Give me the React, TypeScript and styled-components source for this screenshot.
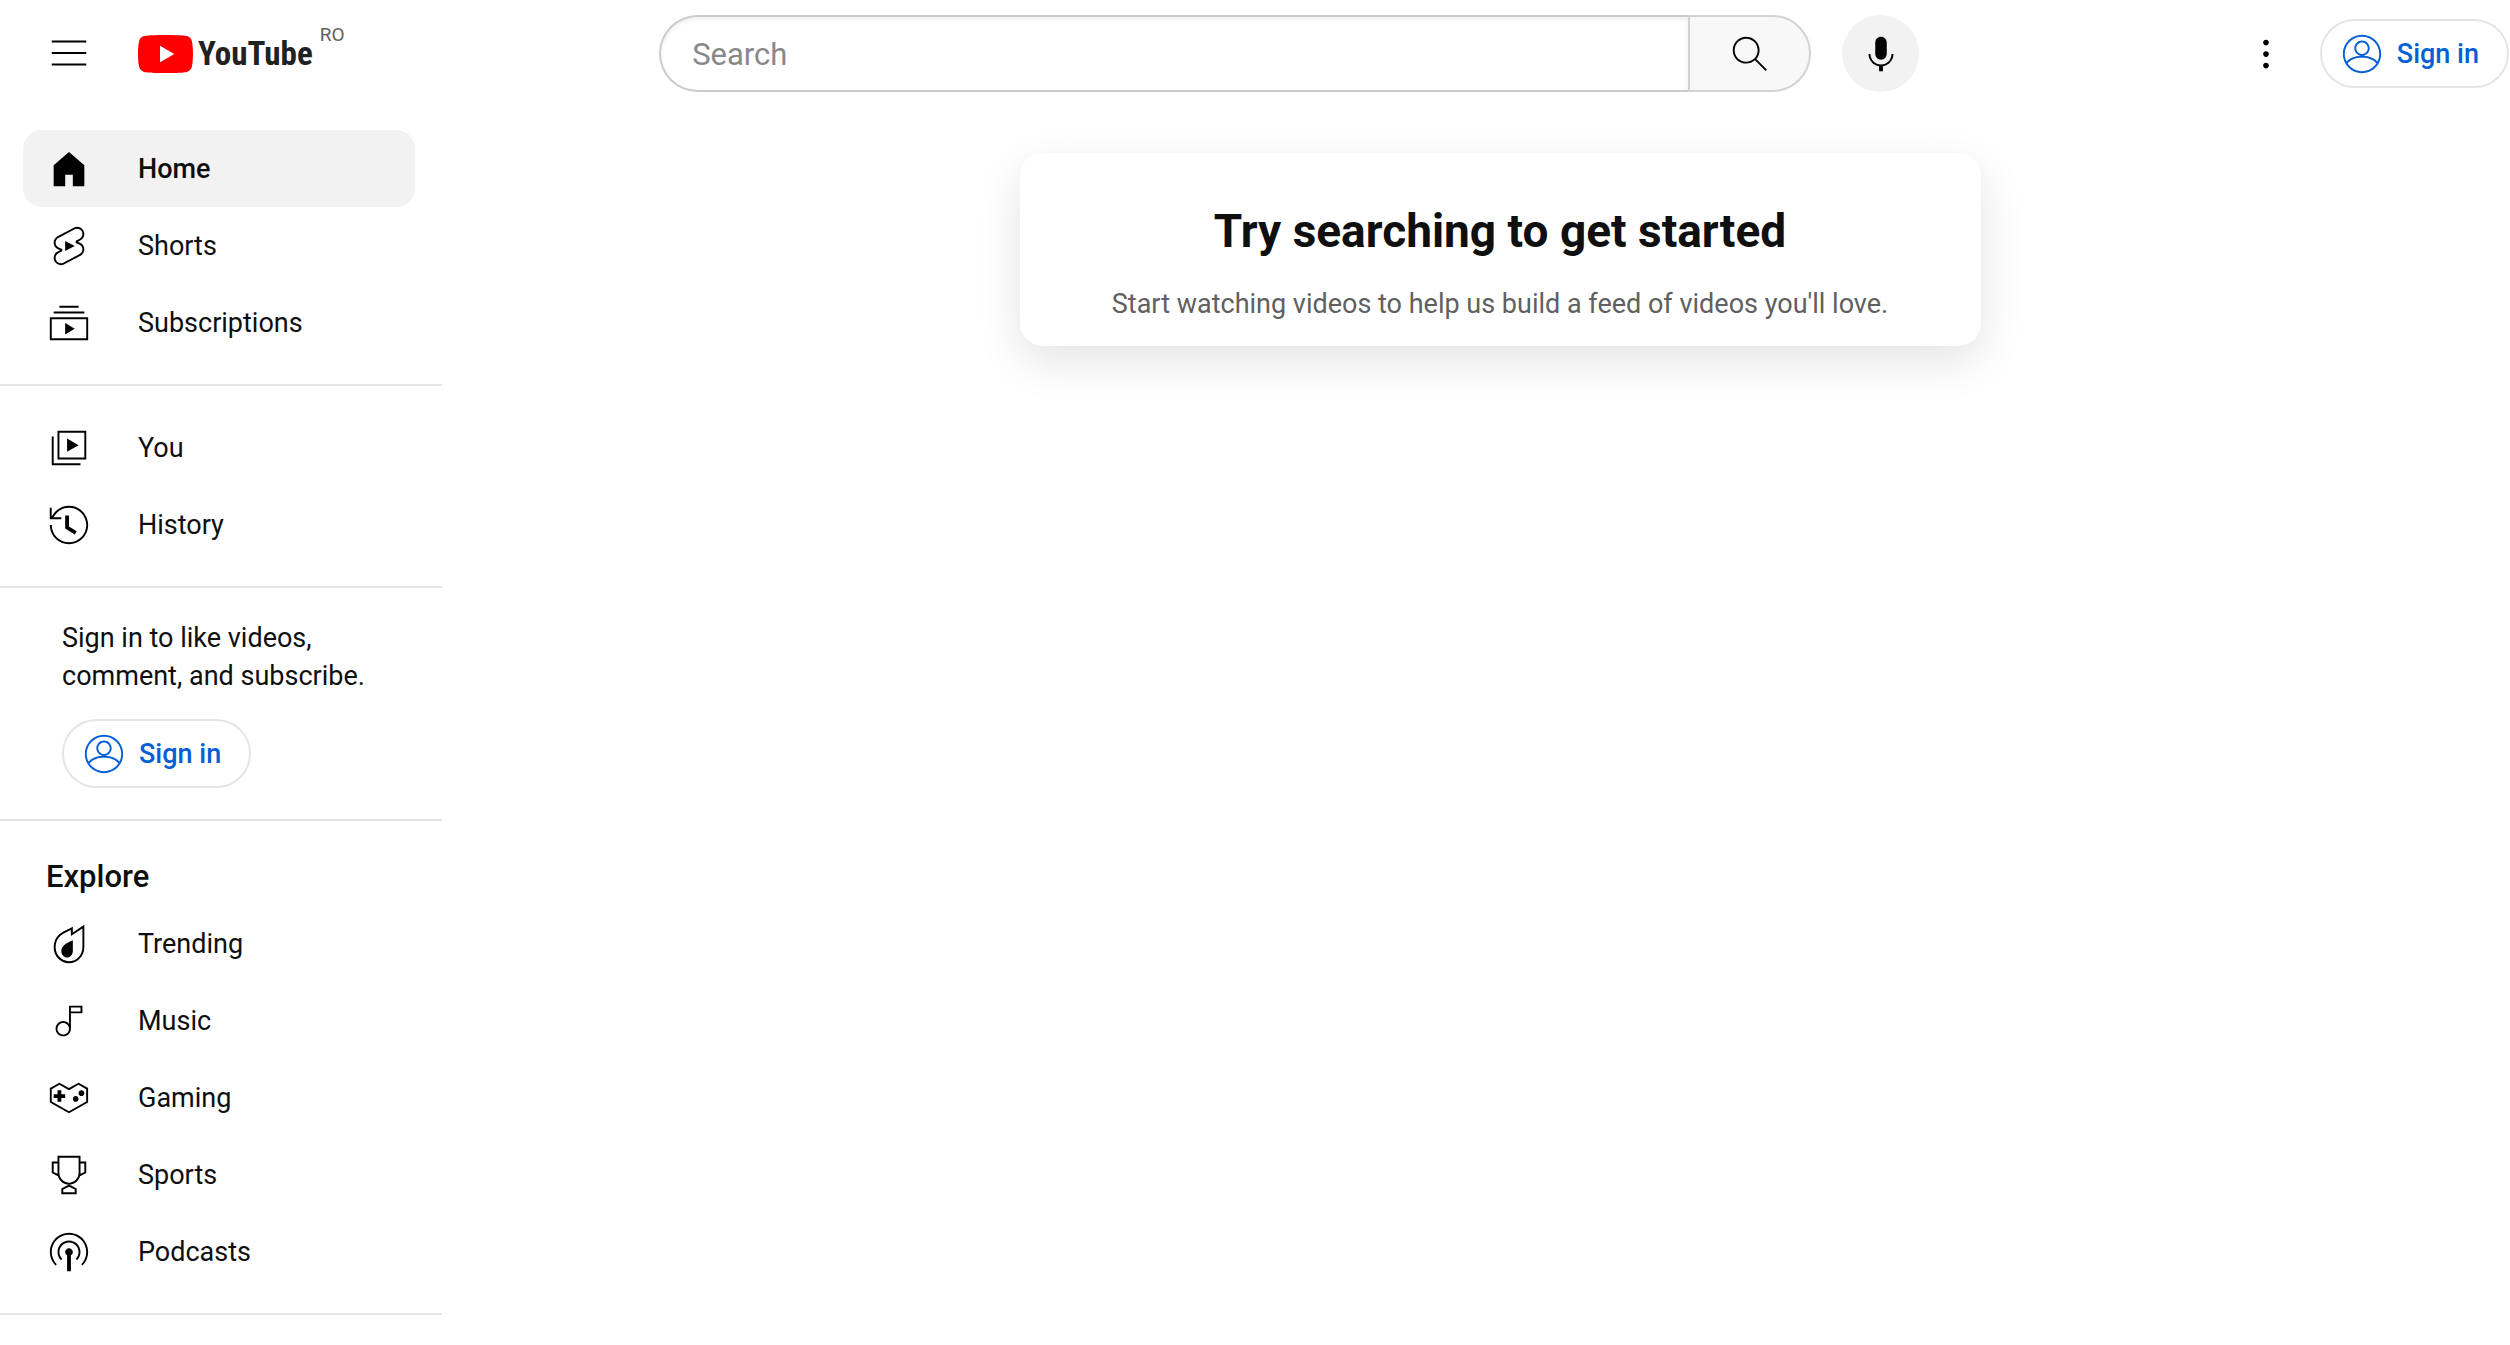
import React from "react";
import styled, { createGlobalStyle } from "styled-components";

const GlobalStyle = createGlobalStyle`
  *, *::before, *::after { box-sizing: border-box; }
  body {
    margin: 0;
    background: #fff;
    color: #0f0f0f;
    font-family: Roboto, "Liberation Sans", Arial, sans-serif;
    font-size: 27px;
    line-height: 38px;
  }
`;

const paths = {
  menu: "M21 6H3V5h18v1zm0 5H3v1h18v-1zm0 6H3v1h18v-1z",
  search:
    "m20.87 20.17-5.59-5.59C16.35 13.35 17 11.75 17 10c0-3.87-3.13-7-7-7s-7 3.13-7 7 3.13 7 7 7c1.75 0 3.35-.65 4.58-1.71l5.59 5.59.7-.71zM10 16c-3.31 0-6-2.69-6-6s2.69-6 6-6 6 2.69 6 6-2.69 6-6 6z",
  mic: "M12 3c-1.66 0-3 1.37-3 3.07v5.86c0 1.7 1.34 3.07 3 3.07s3-1.37 3-3.07V6.07C15 4.37 13.66 3 12 3zm6.5 9h-1c0 3.03-2.47 5.5-5.5 5.5S6.5 15.03 6.5 12h-1c0 3.24 2.39 5.93 5.5 6.41V21h2v-2.59c3.11-.48 5.5-3.17 5.5-6.41z",
  more: "M12 16.5c.83 0 1.5.67 1.5 1.5s-.67 1.5-1.5 1.5-1.5-.67-1.5-1.5.67-1.5 1.5-1.5zM10.5 12c0 .83.67 1.5 1.5 1.5s1.5-.67 1.5-1.5-.67-1.5-1.5-1.5-1.5.67-1.5 1.5zm0-6c0 .83.67 1.5 1.5 1.5s1.5-.67 1.5-1.5-.67-1.5-1.5-1.5-1.5.67-1.5 1.5z",
  account:
    "M12 2C6.48 2 2 6.48 2 12s4.48 10 10 10 10-4.48 10-10S17.52 2 12 2zM3 12c0-4.96 4.04-9 9-9s9 4.04 9 9c0 1.42-.34 2.76-.93 3.96-1.53-1.72-3.98-2.89-7.38-3.03C14.57 12.6 16 10.97 16 9c0-2.21-1.79-4-4-4S8 6.79 8 9c0 1.97 1.43 3.6 3.31 3.93-3.4.14-5.85 1.31-7.38 3.03C3.34 14.76 3 13.42 3 12zm6-3c0-1.65 1.35-3 3-3s3 1.35 3 3-1.35 3-3 3-3-1.35-3-3zm3 12c-3.16 0-5.94-1.64-7.55-4.12C6.01 14.93 8.61 13.9 12 13.9c3.39 0 5.99 1.03 7.55 2.98C17.94 19.36 15.16 21 12 21z",
  home: "M4 21V10.08l8-6.96 8 6.96V21h-6v-6h-4v6H4z",
  shorts:
    "M10 14.65v-5.3L15 12l-5 2.65zm7.77-4.33-1.2-.5L18 9.06c1.84-.96 2.53-3.23 1.56-5.06s-3.24-2.53-5.07-1.56L6 6.94c-1.29.68-2.07 2.04-2 3.49.07 1.42.93 2.67 2.22 3.25.03.01 1.2.5 1.2.5L6 14.93c-1.83.97-2.53 3.24-1.56 5.07.97 1.83 3.24 2.53 5.07 1.56l8.5-4.5c1.29-.68 2.06-2.04 1.99-3.49-.07-1.42-.94-2.68-2.23-3.25zm-.23 5.86-8.5 4.5c-1.34.71-3.01.2-3.72-1.14-.71-1.34-.2-3.01 1.14-3.72l2.04-1.08v-1.21l-.69-.28-1.11-.46c-.99-.41-1.65-1.35-1.7-2.41-.05-1.06.52-2.06 1.46-2.56l8.5-4.5c1.34-.71 3.01-.2 3.72 1.14.71 1.34.2 3.01-1.14 3.72L15.5 9.26v1.21l1.8.74c.99.41 1.65 1.35 1.7 2.41.05 1.06-.52 2.06-1.46 2.56z",
  subscriptions: "M10 18v-6l5 3-5 3zm7-15H7v1h10V3zm3 3H4v1h16V6zm2 3H2v12h20V9zM3 10h18v10H3V10z",
  you: "m11 7 6 3.5-6 3.5V7zm7 13H4V6H3v15h15v-1zm3-2H6V3h15v15zM7 17h13V4H7v13z",
  history:
    "M14.97 16.95 10 13.87V7h2v5.76l4.03 2.49-1.06 1.7zM22 12c0 5.51-4.49 10-10 10S2 17.51 2 12h1c0 4.96 4.04 9 9 9s9-4.04 9-9-4.04-9-9-9C8.81 3 5.92 4.64 4.28 7.38c-.11.18-.22.37-.31.56L3.94 8H8v1H1.96V3h1v4.74c.04-.09.07-.17.11-.25.11-.22.23-.42.35-.63C5.22 3.86 8.51 2 12 2c5.51 0 10 4.49 10 10z",
  trending:
    "M19 3.87v9.77C19 17.7 15.86 21 12 21s-7-3.3-7-7.37v-.13c0-1.06.22-2.13.62-3.09.5-1.19 1.29-2.21 2.27-2.97.85-.66 1.83-1.14 2.87-1.65.39-.19.77-.38 1.15-.58.36-.19.72-.38 1.08-.56v3.22l1.55-1.04L19 3.87M20 2l-6 4V3c-.85.44-1.7.88-2.55 1.33-1.41.74-2.9 1.34-4.17 2.32-1.13.87-2.02 2.05-2.58 3.37-.46 1.09-.7 2.29-.7 3.48v.14C4 18.26 7.58 22 12 22s8-3.74 8-8.36V2zM14 10c-1.15.6-2.4 1.05-3.45 1.8C9.1 12.7 8 14 8 15.6 8 17.5 9.35 19 11 19s3-1.5 3-3.4V10z",
  music:
    "M12 4v9.38c-.73-.84-1.8-1.38-3-1.38-2.21 0-4 1.79-4 4s1.79 4 4 4 4-1.79 4-4V8h6V4h-7zM9 19c-1.66 0-3-1.34-3-3s1.34-3 3-3 3 1.34 3 3-1.34 3-3 3zm9-12h-5V5h5v2z",
  gaming:
    "M10 12H8v2H6v-2H4v-2h2V8h2v2h2v2zm7 .5c0-.83-.67-1.5-1.5-1.5s-1.5.67-1.5 1.5.67 1.5 1.5 1.5 1.5-.67 1.5-1.5zm3-3c0-.83-.67-1.5-1.5-1.5S17 8.67 17 9.5s.67 1.5 1.5 1.5S20 10.33 20 9.5zm-3.03-4.35-4.5 2.53-.49.27-.49-.27-4.5-2.53L3 7.39v6.43l8.98 5.04 8.98-5.04V7.39l-3.99-2.24m0-1.15 4.99 2.8v7.6L11.98 20 2 14.4V6.8L6.99 4l4.99 2.8L16.97 4z",
  sports:
    "M18 5V2H6v3H3v6l3.23 1.61c.7 2.5 2.97 4.34 5.69 4.38L8 19v3h8v-3l-3.92-2.01c2.72-.04 4.99-1.88 5.69-4.38L21 11V5h-3zM6 11.38l-2-1V6h2v5.38zM15 21H9v-1.39l3-1.54 3 1.54V21zm2-10c0 2.76-2.24 5-5 5s-5-2.24-5-5V3h10v8zm3-.62-2 1V6h2v4.38z",
  podcasts:
    "M6 12c0-3.31 2.69-6 6-6s6 2.69 6 6c0 1.66-.67 3.16-1.77 4.25l-.71-.71C16.44 14.63 17 13.38 17 12c0-2.76-2.24-5-5-5s-5 2.24-5 5c0 1.38.56 2.63 1.47 3.54l-.71.71C6.67 15.16 6 13.66 6 12zm8 0c0-1.1-.9-2-2-2s-2 .9-2 2c0 .74.4 1.38 1 1.72V22h2v-8.28c.6-.34 1-.98 1-1.72zm-9.06 7.08.71-.71C4.01 16.74 3 14.49 3 12c0-4.96 4.04-9 9-9s9 4.04 9 9c0 2.49-1.01 4.74-2.65 6.37l.71.71C20.88 17.27 22 14.76 22 12c0-5.52-4.48-10-10-10S2 6.48 2 12c0 2.76 1.12 5.27 2.94 7.08z",
};

type IconName = keyof typeof paths;

const IconSvg = styled.svg<{ $accent?: boolean }>`
  display: block;
  flex: none;
  width: 46px;
  height: 46px;
  fill: ${(p) => (p.$accent ? "#065fd4" : "#000")};
`;

const Icon = ({ name, accent }: { name: IconName; accent?: boolean }) => (
  <IconSvg viewBox="0 0 24 24" aria-hidden="true" $accent={accent}>
    <path fillRule="evenodd" d={paths[name]} />
  </IconSvg>
);

const Header = styled.header`
  display: flex;
  align-items: center;
  justify-content: space-between;
  height: 107px;
  padding: 0 1px 0 30px;
`;

const HeaderStart = styled.div`
  display: flex;
  align-items: center;
  gap: 31px;
  padding-right: 6px;
`;

const HeaderEnd = styled.div`
  display: flex;
  align-items: center;
  gap: 15px;
`;

const IconButton = styled.button<{ $filled?: boolean }>`
  display: flex;
  align-items: center;
  justify-content: center;
  flex: none;
  width: 77px;
  height: 77px;
  padding: 0;
  border: 0;
  border-radius: 50%;
  background: ${(p) => (p.$filled ? "#f2f2f2" : "transparent")};
  cursor: pointer;
`;

const LogoLink = styled.a`
  display: flex;
  align-items: center;
  gap: 5px;
  height: 58px;
  color: #212121;
  text-decoration: none;
`;

const LogoMark = styled.svg`
  display: block;
  width: 55px;
  height: 38px;
`;

const Wordmark = styled.span`
  font-family: "Liberation Sans Narrow", "Roboto Condensed", Roboto, sans-serif;
  font-size: 33px;
  font-weight: 700;
  line-height: 38px;
`;

const Region = styled.span`
  align-self: flex-start;
  margin-left: 2px;
  color: #606060;
  font-size: 19px;
  line-height: 19px;
`;

const SearchArea = styled.div`
  display: flex;
  align-items: center;
  flex: 0 1 1260px;
  gap: 31px;
`;

const SearchForm = styled.form`
  display: flex;
  flex: 1;
  height: 77px;
`;

const SearchInput = styled.input`
  flex: 1;
  min-width: 0;
  padding: 2px 31px 0;
  border: 2px solid #ccc;
  border-right: 0;
  border-radius: 39px 0 0 39px;
  background: #fff;
  box-shadow: inset 0 2px 4px #eee;
  color: #0f0f0f;
  font: inherit;
  font-size: 31px;
  outline: 0;
  &::placeholder { color: #888; opacity: 1; }
`;

const SearchButton = styled.button`
  display: flex;
  align-items: center;
  justify-content: center;
  width: 123px;
  padding: 0;
  border: 2px solid #d3d3d3;
  border-radius: 0 39px 39px 0;
  background: #f8f8f8;
  cursor: pointer;
`;

const SignInLink = styled.a`
  display: inline-flex;
  align-items: center;
  gap: 12px;
  height: 69px;
  padding: 0 28px 0 17px;
  border: 2px solid #e5e5e5;
  border-radius: 35px;
  color: #065fd4;
  font-weight: 500;
  text-decoration: none;
`;

const Body = styled.div`
  display: flex;
  align-items: flex-start;
`;

const Sidebar = styled.nav`
  flex: none;
  width: 442px;
`;

const Section = styled.section`
  padding: 23px 27px 23px 23px;
  border-bottom: 2px solid #e5e5e5;
`;

const PromptSection = styled.section`
  padding: 31px 60px 31px 62px;
  border-bottom: 2px solid #e5e5e5;
`;

const Prompt = styled.p`
  margin: 0 0 24px;
`;

const SectionTitle = styled.h2`
  margin: 0;
  padding: 14px 23px 9px;
  font-size: 31px;
  font-weight: 500;
  line-height: 38px;
`;

const List = styled.ul`
  margin: 0;
  padding: 0;
  list-style: none;
`;

const NavLink = styled.a<{ $active?: boolean }>`
  display: flex;
  align-items: center;
  gap: 46px;
  height: 77px;
  padding: 0 23px;
  border-radius: 19px;
  background: ${(p) => (p.$active ? "#f2f2f2" : "transparent")};
  color: #0f0f0f;
  font-weight: ${(p) => (p.$active ? 500 : 400)};
  text-decoration: none;
`;

const Main = styled.main`
  display: flex;
  flex: 1;
  justify-content: center;
  min-width: 0;
  padding: 46px 0 46px 48px;
`;

const Card = styled.section`
  width: 100%;
  max-width: 961px;
  padding: 46px 46px 23px;
  border-radius: 23px;
  background: #fff;
  box-shadow: 0 15px 46px rgba(0, 0, 0, 0.11);
  text-align: center;
`;

const CardTitle = styled.h1`
  margin: 0 0 22px;
  font-size: 46px;
  font-weight: 700;
  line-height: 64px;
`;

const CardText = styled.p`
  margin: 0;
  color: #606060;
`;

type Entry = { icon: IconName; label: string; active?: boolean };

const primary: Entry[] = [
  { icon: "home", label: "Home", active: true },
  { icon: "shorts", label: "Shorts" },
  { icon: "subscriptions", label: "Subscriptions" },
];

const library: Entry[] = [
  { icon: "you", label: "You" },
  { icon: "history", label: "History" },
];

const explore: Entry[] = [
  { icon: "trending", label: "Trending" },
  { icon: "music", label: "Music" },
  { icon: "gaming", label: "Gaming" },
  { icon: "sports", label: "Sports" },
  { icon: "podcasts", label: "Podcasts" },
];

const NavList = ({ entries }: { entries: Entry[] }) => (
  <List>
    {entries.map((entry) => (
      <li key={entry.label}>
        <NavLink href="#" $active={entry.active} aria-current={entry.active ? "page" : undefined}>
          <Icon name={entry.icon} />
          <span>{entry.label}</span>
        </NavLink>
      </li>
    ))}
  </List>
);

const SignIn = () => (
  <SignInLink href="#">
    <Icon name="account" accent />
    <span>Sign in</span>
  </SignInLink>
);

export default function App() {
  return (
    <>
      <GlobalStyle />
      <Header>
        <HeaderStart>
          <IconButton type="button" aria-label="Guide">
            <Icon name="menu" />
          </IconButton>
          <LogoLink href="#">
            <LogoMark viewBox="0 0 55 38" aria-hidden="true">
              <path
                fill="#f00"
                d="M53.8 5.9A6.9 6.9 0 0 0 49 1.1C44.7 0 27.5 0 27.5 0S10.3 0 6 1.1A6.9 6.9 0 0 0 1.2 5.9C0 10.2 0 19 0 19s0 8.8 1.2 13.1A6.9 6.9 0 0 0 6 36.9C10.3 38 27.5 38 27.5 38s17.2 0 21.5-1.1a6.9 6.9 0 0 0 4.8-4.8C55 27.8 55 19 55 19s0-8.8-1.2-13.1z"
              />
              <path fill="#fff" d="M22 27.2 36.3 19 22 10.8z" />
            </LogoMark>
            <Wordmark>YouTube</Wordmark>
            <Region>RO</Region>
          </LogoLink>
        </HeaderStart>
        <SearchArea>
          <SearchForm role="search" onSubmit={(e) => e.preventDefault()}>
            <SearchInput type="text" placeholder="Search" aria-label="Search" />
            <SearchButton type="submit" aria-label="Search">
              <Icon name="search" />
            </SearchButton>
          </SearchForm>
          <IconButton type="button" $filled aria-label="Search with your voice">
            <Icon name="mic" />
          </IconButton>
        </SearchArea>
        <HeaderEnd>
          <IconButton type="button" aria-label="Settings">
            <Icon name="more" />
          </IconButton>
          <SignIn />
        </HeaderEnd>
      </Header>
      <Body>
        <Sidebar>
          <Section>
            <NavList entries={primary} />
          </Section>
          <Section>
            <NavList entries={library} />
          </Section>
          <PromptSection>
            <Prompt>Sign in to like videos, comment, and subscribe.</Prompt>
            <SignIn />
          </PromptSection>
          <Section>
            <SectionTitle>Explore</SectionTitle>
            <NavList entries={explore} />
          </Section>
        </Sidebar>
        <Main>
          <Card>
            <CardTitle>Try searching to get started</CardTitle>
            <CardText>Start watching videos to help us build a feed of videos you'll love.</CardText>
          </Card>
        </Main>
      </Body>
    </>
  );
}
